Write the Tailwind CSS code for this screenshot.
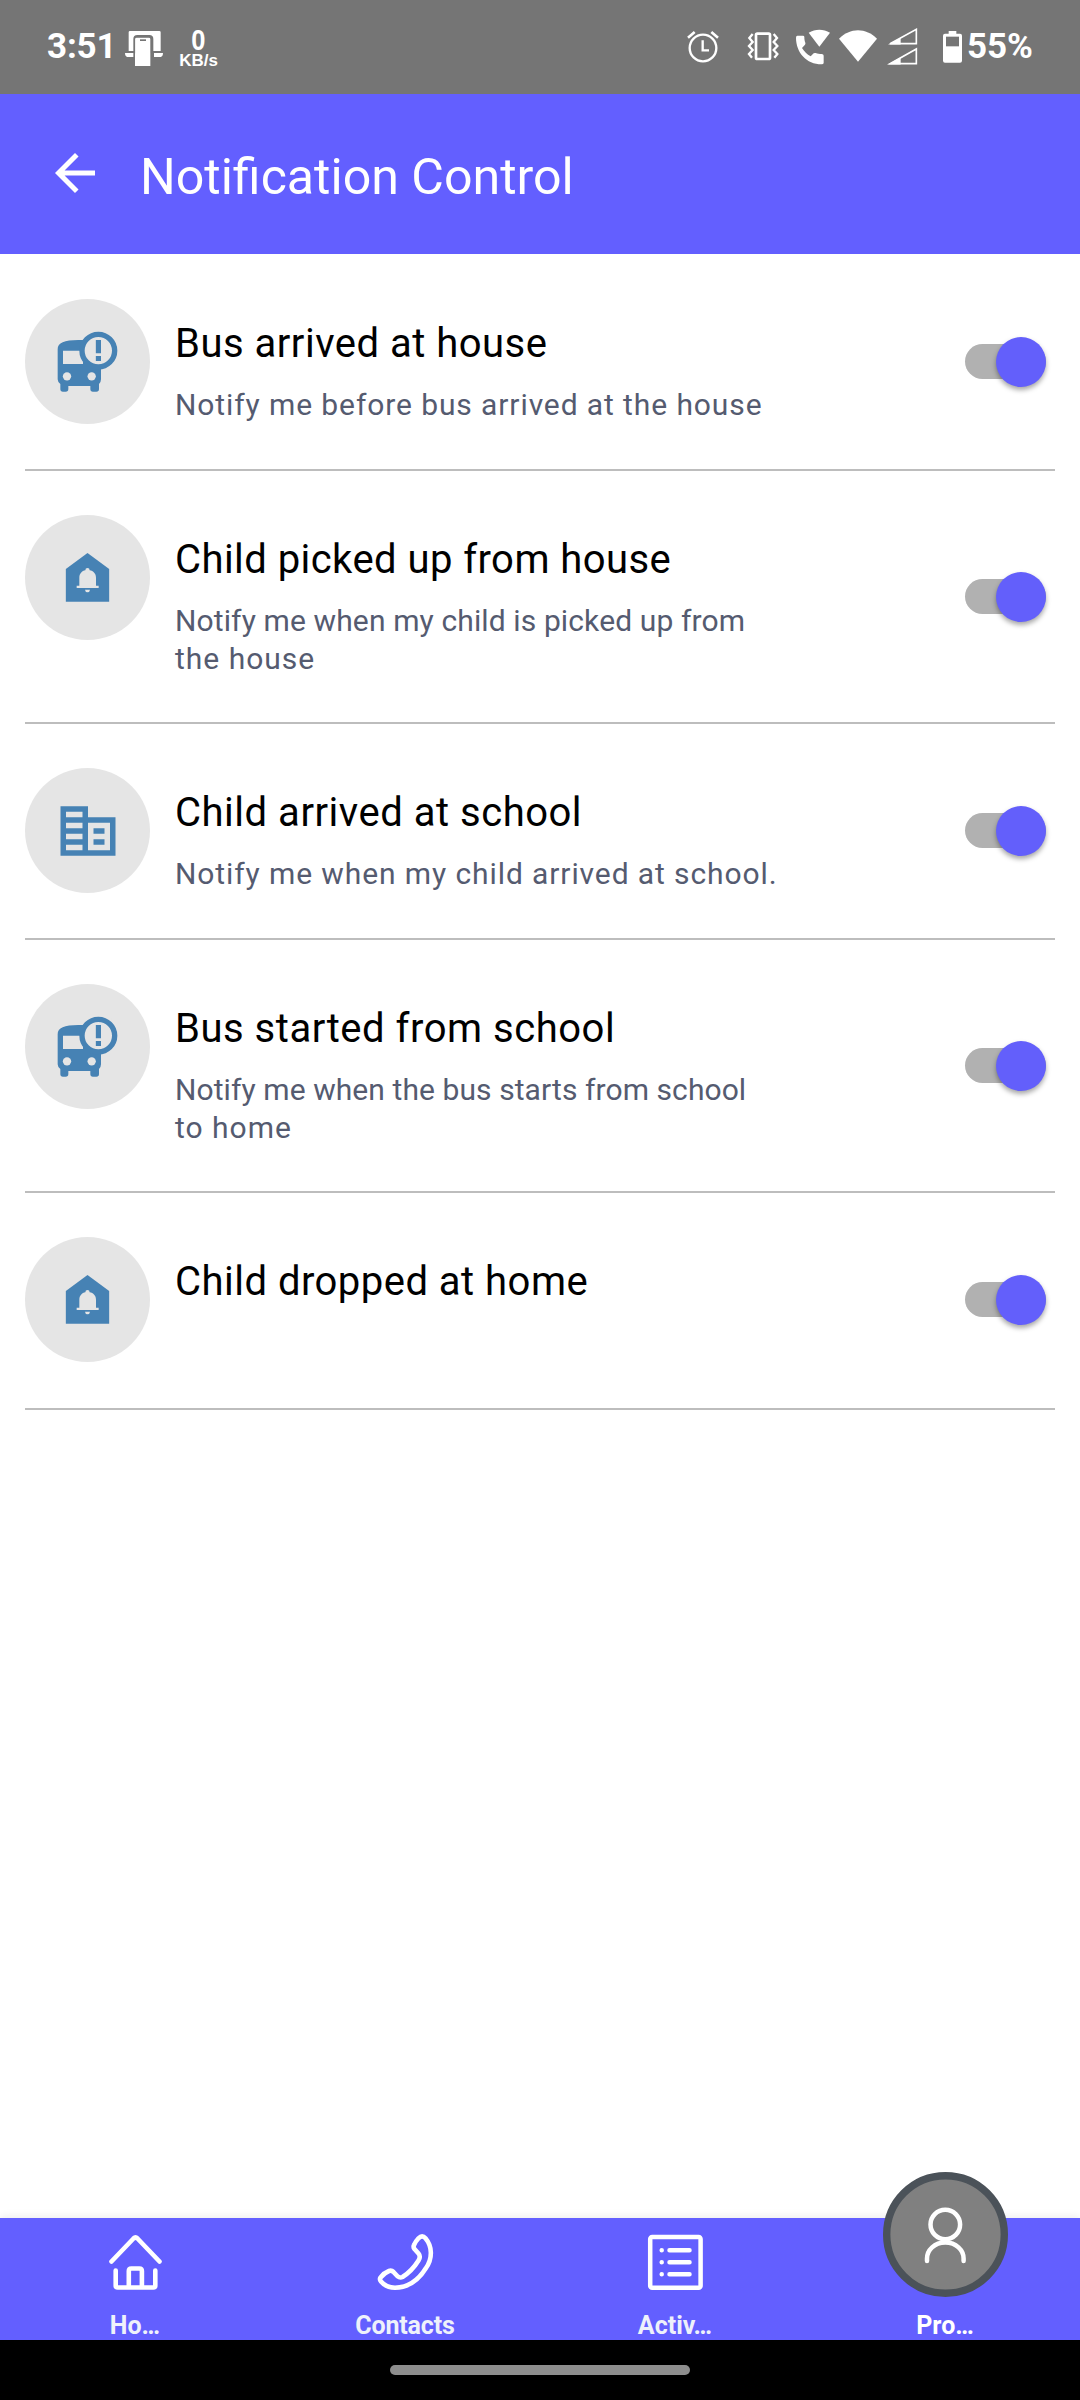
<!DOCTYPE html>
<html lang="en"><head><meta charset="utf-8"><title>Notification Control</title>
<script src="https://cdn.jsdelivr.net/npm/@tailwindcss/browser@4"></script></head>
<body class="bg-white font-['Roboto',sans-serif]">
<svg class="hidden">
<symbol id="bus" viewBox="0 0 375 375"><path fill="#4682b4" d="M98 151c0-20 20-28 62-28h68v118q0 8-6 14v15q0 8-8 8h-10q-8 0-8-8v-9h-66v9q0 8-8 8h-8q-8 0-8-8v-15q-8-6-8-14z"/><path fill="#e5e5e5" d="M114 155h60v40h-60zM180 100h80v50h-30z"/><circle cx="126" cy="232" r="12.500" fill="#e5e5e5"/><circle cx="200" cy="232" r="12.500" fill="#e5e5e5"/><circle cx="220" cy="155" r="49" fill="#e5e5e5" stroke="#4682b4" stroke-width="16"/><path fill="#4682b4" d="M212.500 123h15.500v40h-15.500zM212.500 171h15.500v15h-15.500z"/></symbol>
<symbol id="home" viewBox="0 0 375 375"><path fill="#4682b4" d="M187.500 114L252.500 162V260.500H122.500V162z"/><path fill="#e5e5e5" d="M155 219v-7h8v-24c0-12 8-20 18-22q0-7 6.500-7t6.500 7c11 2 19 10 19 22v24h8v7zM180 224h15q-1 8-7.500 8t-7.500-8z"/></symbol>
<symbol id="school" viewBox="0 0 24 24"><path fill="#4682b4" d="M12 7V3H2v18h20V7H12zM10 19H4v-2h6v2zm0-4H4v-2h6v2zm0-4H4V9h6v2zm0-4H4V5h6v2zm10 12h-8V9h8v10zm-2-8h-4v2h4v-2zm0 4h-4v2h4v-2z"/></symbol>
</svg>
<div class="flex h-[2400px] w-[1080px] flex-col overflow-hidden">
 <header class="flex h-[94px] shrink-0 items-start bg-[#757575] pl-[47px] text-white">
  <span class="mt-[26px] w-[77px] text-[35px] leading-[41px] font-bold tracking-[-0.2px]">3:51</span>
  <svg class="mt-[28px] h-[40px] w-[40px]" viewBox="372 84 120 120" fill="#fff"><path d="M386 153V97q0-4 4-4h88q4 0 4 4v56h-22v-36q0-12-12-12h-36q-12 0-12 12v36zM375 159h25v12h-18q-7-2-7-12zM489 159h-27v12h20q7-2 7-12zM405 198v-81q0-4 4-4h38q4 0 4 4v81z"/><path d="M404 160v-43q0-7 7-7h36q7 0 7 7v43" fill="none" stroke="#757575" stroke-width="2"/><path fill="#757575" d="M420 118h18v5h-18z"/></svg>
  <div class="mt-[26px] ml-[12px] flex w-[45px] flex-col items-center"><span class="font-['Liberation_Sans'] text-[30px] leading-[27px] font-bold [transform:scaleX(.85)]">0</span><span class="font-['Liberation_Sans'] text-[17px] leading-[15px] font-bold">KB/s</span></div>
  <div class="ml-auto flex items-start pr-[47px]">
   <svg class="mt-[28px] mr-[26px] h-[38px] w-[34px]" viewBox="78 84 102 114" fill="none" stroke="#fff" stroke-width="7"><circle cx="129" cy="144" r="40"/><path d="M128 121v30h19"/><path d="M84 113l20-17M174 113l-20-17" stroke-width="8"/></svg>
   <svg class="mt-[28px] mr-[14px] h-[38px] w-[34px]" viewBox="258 84 102 114" fill="none" stroke="#fff" stroke-width="7"><rect x="288" y="101" width="42" height="76" rx="4" stroke-width="8"/><path d="M278 102l-10 12 10 12-11 12 11 12-11 12 9 11M341 102l10 12-10 12 11 12-11 12 11 12-9 11"/></svg>
   <svg class="mt-[28px] mr-[6px] h-[38px] w-[38px]" viewBox="402 84 114 114" fill="#fff"><path d="M412 107h17q4 0 4 4c0 7 1 12 3 17q1 3-1 6l-9 10c7 11 15 19 26 25l9-9q3-2 6-1c6 2 11 3 18 3q6 0 6 5v21q0 5-6 5c-46 0-77-36-77-80q0-6 4-6z"/><path d="M446 98c20-12 44-12 64 0l-32 42z"/></svg>
   <svg class="mt-[28px] mr-[9px] h-[38px] w-[40px]" viewBox="534 84 120 114" fill="#fff"><path d="M537 116c33-34 81-34 114 0l-57 69z"/></svg>
   <svg class="mt-[28px] mr-[22px] h-[38px] w-[32px]" viewBox="681 84 96 114"><g fill="none" stroke="#fff" stroke-width="5"><path d="M690 131L769 88V131zM690 191L769 147V191z"/></g><path fill="#fff" d="M684 133.500L722 113V133.500zM684 193.500L722 172V193.500z"/></svg>
   <svg class="mt-[28px] mr-[3px] h-[38px] w-[23px]" viewBox="843 84 69 114"><path fill="#fff" d="M866 93h23v8h11q6 0 6 6v75q0 6-6 6h-45q-6 0-6-6v-75q0-6 6-6h11z"/><path fill="#757575" d="M858 110h39v29h-39z"/></svg>
   <span class="mt-[26px] text-[35px] leading-[41px] font-bold">55%</span>
  </div>
 </header>
 <div class="flex h-[160px] shrink-0 items-start bg-[#635fff] pl-[45px] text-white">
  <svg class="mt-[49px] h-[60px] w-[60px]" viewBox="0 0 24 24" fill="#fff"><path d="M20 11H7.830l5.590-5.590L12 4l-8 8 8 8 1.410-1.410L7.830 13H20v-2z"/></svg>
  <h1 class="mt-[53px] ml-[35px] text-[50.1px] leading-[60px] whitespace-nowrap">Notification Control</h1>
 </div>
 <main class="grow px-[25px] pt-px">
  <section class="flex h-[216px] items-center border-b-2 border-[#bdbdbd]">
   <div class="mt-[44px] h-[125px] w-[125px] self-start rounded-full bg-[#e5e5e5]"><svg class="h-[125px] w-[125px]"><use href="#bus"/></svg></div>
   <div class="ml-[25px] grow self-start pt-[65px]"><h2 class="text-[40px] leading-[48px] tracking-[0.5px] text-black">Bus arrived at house</h2><p class="mt-[18px] text-[30px] leading-[38px] tracking-[0.9px] text-[#555b70]">Notify me before bus arrived at the house</p></div>
   <div class="mr-[9px] mb-px flex h-[35px] w-[81px] items-center justify-end rounded-full bg-[#b1b1b1]"><span class="mt-px h-[50px] w-[50px] rounded-full bg-[#635ffb] shadow-[0_3px_5px_rgba(0,0,0,.35)]"></span></div>
  </section>
  <section class="flex h-[253px] items-center border-b-2 border-[#bdbdbd]">
   <div class="mt-[44px] h-[125px] w-[125px] self-start rounded-full bg-[#e5e5e5]"><svg class="h-[125px] w-[125px]"><use href="#home"/></svg></div>
   <div class="ml-[25px] grow self-start pt-[65px]"><h2 class="text-[40px] leading-[48px] tracking-[0.44px] text-black">Child picked up from house</h2><p class="mt-[18px] text-[30px] leading-[38px] text-[#555b70]"><span class="tracking-[0.12px]">Notify me when my child is picked up from</span><br><span class="tracking-[1px]">the house</span></p></div>
   <div class="mr-[9px] flex h-[35px] w-[81px] items-center justify-end rounded-full bg-[#b1b1b1]"><span class="h-[50px] w-[50px] rounded-full bg-[#635ffb] shadow-[0_3px_5px_rgba(0,0,0,.35)]"></span></div>
  </section>
  <section class="flex h-[216px] items-center border-b-2 border-[#bdbdbd]">
   <div class="mt-[44px] flex h-[125px] w-[125px] items-center justify-center self-start rounded-full bg-[#e5e5e5]"><svg class="h-[66px] w-[66px]"><use href="#school"/></svg></div>
   <div class="ml-[25px] grow self-start pt-[65px]"><h2 class="text-[40px] leading-[48px] tracking-[0.52px] text-black">Child arrived at school</h2><p class="mt-[18px] text-[30px] leading-[38px] tracking-[0.9px] text-[#555b70]">Notify me when my child arrived at school.</p></div>
   <div class="mr-[9px] mb-px flex h-[35px] w-[81px] items-center justify-end rounded-full bg-[#b1b1b1]"><span class="mt-px h-[50px] w-[50px] rounded-full bg-[#635ffb] shadow-[0_3px_5px_rgba(0,0,0,.35)]"></span></div>
  </section>
  <section class="flex h-[253px] items-center border-b-2 border-[#bdbdbd]">
   <div class="mt-[44px] h-[125px] w-[125px] self-start rounded-full bg-[#e5e5e5]"><svg class="h-[125px] w-[125px]"><use href="#bus"/></svg></div>
   <div class="ml-[25px] grow self-start pt-[65px]"><h2 class="text-[40px] leading-[48px] tracking-[0.52px] text-black">Bus started from school</h2><p class="mt-[18px] text-[30px] leading-[38px] text-[#555b70]"><span class="tracking-[0.08px]">Notify me when the bus starts from school</span><br><span class="tracking-[1px]">to home</span></p></div>
   <div class="mr-[9px] flex h-[35px] w-[81px] items-center justify-end rounded-full bg-[#b1b1b1]"><span class="h-[50px] w-[50px] rounded-full bg-[#635ffb] shadow-[0_3px_5px_rgba(0,0,0,.35)]"></span></div>
  </section>
  <section class="flex h-[217px] items-center border-b-2 border-[#bdbdbd]">
   <div class="mt-[44px] h-[125px] w-[125px] self-start rounded-full bg-[#e5e5e5]"><svg class="h-[125px] w-[125px]"><use href="#home"/></svg></div>
   <div class="ml-[25px] grow self-start pt-[65px]"><h2 class="text-[40px] leading-[48px] tracking-[0.48px] text-black">Child dropped at home</h2></div>
   <div class="mr-[9px] mb-[2px] flex h-[35px] w-[81px] items-center justify-end rounded-full bg-[#b1b1b1]"><span class="mt-px h-[50px] w-[50px] rounded-full bg-[#635ffb] shadow-[0_3px_5px_rgba(0,0,0,.35)]"></span></div>
  </section>
 </main>
 <nav class="grid h-[122px] shrink-0 grid-cols-4 bg-[#635fff] text-[25px] leading-[30px] font-bold text-[#eef1fb] shadow-[0_-2px_8px_rgba(0,0,0,.07)]">
  <div class="flex flex-col items-center pt-[12px]"><svg class="h-[65px] w-[60px]" viewBox="0 0 60 65" fill="none" stroke="#fff" stroke-width="4.600" stroke-linecap="round" stroke-linejoin="round"><path d="M6.500 31.500L28.500 8.500q2-2 4 0L54.500 31.500M10.700 40.500V55.500q0 2 2 2H48.300q2 0 2-2V40.500M23.800 57V41q0-2.500 2.500-2.500h8.100q2.500 0 2.500 2.500v16"/></svg><span class="mt-[16px]">Ho…</span></div>
  <div class="flex flex-col items-center pt-[12px]"><svg class="h-[65px] w-[60px]" viewBox="0 0 60 65" fill="none" stroke="#fff" stroke-width="4.600" stroke-linejoin="round"><path d="M43.500 8.300q3.700-3.800 7 0C57 16 58 28 51 38C43 51 33 57.500 20 57.800Q11 57.500 6 51.500q-2-2.500 0-4.500Q9 43 14 41q2.500-1 4.500 1l4 4.300q2.500 2 5 .700Q37 41 43.500 30.500q2.500-4 0-7L39.500 19q-1.500-2-.5-4Q40.500 11.500 43.500 8.300z"/></svg><span class="mt-[16px] tracking-[-0.15px]">Contacts</span></div>
  <div class="flex flex-col items-center pt-[12px]"><svg class="h-[65px] w-[60px]" viewBox="0 0 60 65" fill="none" stroke="#fff" stroke-width="4.500" stroke-linecap="round"><rect x="5.200" y="7" width="50.400" height="50.700" rx="2"/><path d="M24.500 20.300h20M24.500 32.300h20M24.500 44.200h20M16.700 20.300h.01M16.700 32.300h.01M16.700 44.200h.01"/></svg><span class="mt-[16px]">Activ…</span></div>
  <div class="relative flex flex-col items-center pt-[93px] text-white"><svg class="absolute -top-[46px] left-[73px] h-[125px] w-[125px]" viewBox="0 0 125 125" fill="none" stroke="#fff" stroke-width="4.500" stroke-linecap="round"><circle cx="62.500" cy="62.500" r="58.800" fill="#808080" stroke="#4b5259" stroke-width="7.400"/><circle cx="62.300" cy="52.500" r="14.800"/><path d="M44 89v-2.500C44 78 51.500 70.500 62.300 70.500S80.600 78 80.600 86.500V89"/></svg><span>Pro…</span></div>
 </nav>
 <div class="flex h-[60px] shrink-0 items-center justify-center bg-black"><div class="h-[10px] w-[300px] rounded-full bg-[#8e8e8e]"></div></div>
</div>
</body></html>
